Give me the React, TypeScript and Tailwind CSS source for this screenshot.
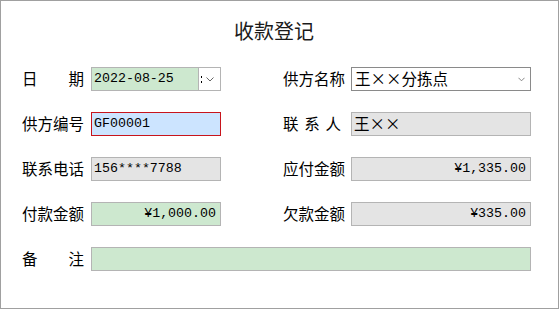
import React from "react";

const cjk = { fontFamily: '"Noto Sans CJK SC", "Noto Sans", sans-serif' };
const mono = { fontFamily: '"Liberation Mono", "DejaVu Sans Mono", monospace' };

function Label({ text, wide }: { text: string; wide: number }) {
  const chars = text.split("");
  return (
    <div
      className="flex justify-between text-[15.5px] leading-none text-black"
      style={{ ...cjk, width: wide }}
    >
      {chars.map((c, i) => (
        <span key={i}>{c}</span>
      ))}
    </div>
  );
}

function Chevron({ w = 8, color = "#555" }: { w?: number; color?: string }) {
  return (
    <svg width={w} height={5} viewBox="0 0 8 5" fill="none">
      <polyline points="0.5,0.5 4,4 7.5,0.5" stroke={color} strokeWidth="1" />
    </svg>
  );
}

export default function App() {
  return (
    <div className="w-[560px] h-[310px] bg-white">
      <div className="w-[559px] h-[309px] border border-[#a0a0a0] bg-white flex flex-col">
        <div
          className="h-[58px] pt-[16px] pr-[11px] text-center text-[20px] leading-[28px] text-[#1a1a1a]"
          style={cjk}
        >
          收款登记
        </div>
        <div className="flex flex-col gap-[21px] pl-[21px] mt-[8px]">
          {/* Row 1 */}
          <div className="flex items-center h-[24px]">
            <Label text="日期" wide={62} />
            <div className="ml-[7px] w-[130px] h-[24px] flex border border-[#b4b4b4]">
              <div
                className="w-[107px] h-full bg-[#cde8cf] border-r border-[#b4b4b4] flex items-center pl-[2px] text-[13.3px] text-black"
                style={mono}
              >
                2022-08-25
              </div>
              <div className="flex-1 flex items-center bg-white pl-[2px]">
                <span className="flex flex-col gap-[3px] mr-[4px]">
                  <span className="w-[1px] h-[2px] bg-black"></span>
                  <span className="w-[1px] h-[2px] bg-black"></span>
                </span>
                <Chevron w={8} color="#666" />
              </div>
            </div>
            <div className="ml-[62px]">
              <Label text="供方名称" wide={61} />
            </div>
            <div
              className="ml-[7px] w-[180px] h-[24px] border border-[#8a8a8a] bg-white flex items-center pl-[3px] pr-[5px]"
            >
              <span className="text-[15.5px] leading-none text-black flex-1" style={cjk}>
                王××分拣点
              </span>
              <Chevron w={7} color="#777" />
            </div>
          </div>

          {/* Row 2 */}
          <div className="flex items-center h-[24px]">
            <Label text="供方编号" wide={62} />
            <div
              className="ml-[7px] w-[130px] h-[24px] border border-[#c8141c] bg-[#cce4ff] flex items-center pl-[2px] text-[13.3px] text-black"
              style={mono}
            >
              GF00001
            </div>
            <div className="ml-[62px]">
              <Label text="联系人" wide={58} />
            </div>
            <div className="ml-[10px] w-[180px] h-[24px] border border-[#b4b4b4] bg-[#e4e4e4] flex items-center pl-[2px]">
              <span className="text-[15.5px] leading-none text-black" style={cjk}>
                王××
              </span>
            </div>
          </div>

          {/* Row 3 */}
          <div className="flex items-center h-[24px]">
            <Label text="联系电话" wide={62} />
            <div
              className="ml-[7px] w-[130px] h-[24px] border border-[#b4b4b4] bg-[#e4e4e4] flex items-center pl-[2px] text-[13.3px] text-black"
              style={mono}
            >
              156****7788
            </div>
            <div className="ml-[62px]">
              <Label text="应付金额" wide={61} />
            </div>
            <div
              className="ml-[7px] w-[180px] h-[24px] border border-[#b4b4b4] bg-[#e4e4e4] flex items-center justify-end pr-[4px] text-[13.3px] text-black"
              style={mono}
            >
              ¥1,335.00
            </div>
          </div>

          {/* Row 4 */}
          <div className="flex items-center h-[24px]">
            <Label text="付款金额" wide={62} />
            <div
              className="ml-[7px] w-[130px] h-[24px] border border-[#b4b4b4] bg-[#cde8cf] flex items-center justify-end pr-[4px] text-[13.3px] text-black"
              style={mono}
            >
              ¥1,000.00
            </div>
            <div className="ml-[62px]">
              <Label text="欠款金额" wide={61} />
            </div>
            <div
              className="ml-[7px] w-[180px] h-[24px] border border-[#b4b4b4] bg-[#e4e4e4] flex items-center justify-end pr-[4px] text-[13.3px] text-black"
              style={mono}
            >
              ¥335.00
            </div>
          </div>

          {/* Row 5 */}
          <div className="flex items-center h-[24px]">
            <Label text="备注" wide={62} />
            <div className="ml-[7px] w-[440px] h-[24px] border border-[#b4b4b4] bg-[#cde8cf]"></div>
          </div>
        </div>
      </div>
    </div>
  );
}
